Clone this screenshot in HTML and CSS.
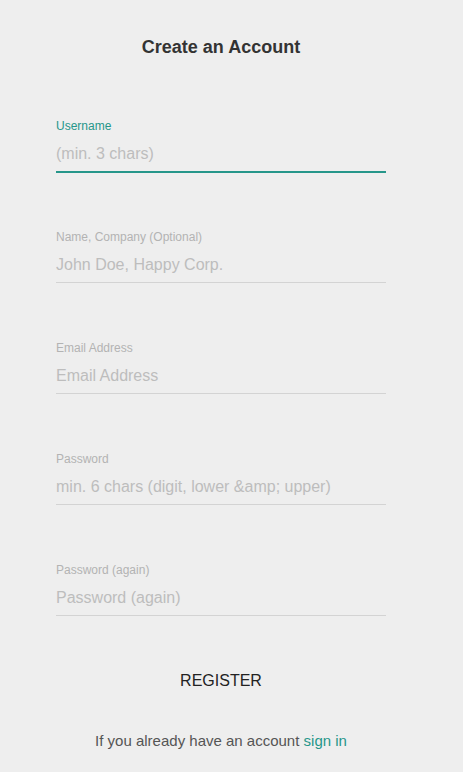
FILE: index.html
```html
<!DOCTYPE html>
<html>
<head>
<meta charset="utf-8">
<link rel="stylesheet" href="styles.css">
</head>
<body>
<div class="page">
  <h1 class="title">Create an Account</h1>
  <form class="form">
    <div class="field active">
      <label class="label">Username</label>
      <input class="input" type="text" placeholder="(min. 3 chars)">
    </div>
    <div class="field">
      <label class="label">Name, Company (Optional)</label>
      <input class="input" type="text" placeholder="John Doe, Happy Corp.">
    </div>
    <div class="field">
      <label class="label">Email Address</label>
      <input class="input" type="text" placeholder="Email Address">
    </div>
    <div class="field">
      <label class="label">Password</label>
      <input class="input" type="password" placeholder="min. 6 chars (digit, lower &amp;amp; upper)">
    </div>
    <div class="field">
      <label class="label">Password (again)</label>
      <input class="input" type="password" placeholder="Password (again)">
    </div>
    <div class="actions">
      <button class="register" type="button">REGISTER</button>
    </div>
    <p class="signin">If you already have an account <a class="link" href="#">sign in</a></p>
  </form>
</div>
</body>
</html>
```

FILE: styles.css
```css
html, body {
  margin: 0;
  padding: 0;
  background: #eeeeee;
  font-family: "Liberation Sans", Arial, Helvetica, sans-serif;
}
.page {
  width: 330px;
  margin-left: 56px;
  padding-top: 37px;
}
.title {
  margin: 0;
  font-size: 18px;
  line-height: 20px;
  font-weight: bold;
  color: #333333;
  text-align: center;
}
.form {
  margin-top: 62px;
}
.field {
  display: flex;
  flex-direction: column;
  margin-bottom: 57px;
}
.label {
  font-size: 12px;
  line-height: 14px;
  color: #b3b3b3;
  margin-bottom: 4px;
}
.input {
  box-sizing: border-box;
  height: 35px;
  padding: 0;
  margin: 0 0 1px;
  border: none;
  border-bottom: 1px solid #d3d3d3;
  background: transparent;
  font-family: inherit;
  font-size: 16px;
  color: #333;
  outline: none;
}
.input::placeholder {
  color: #bdbdbd;
}
.field.active .label {
  color: #26968a;
}
.field.active .input {
  height: 36px;
  margin-bottom: 0;
  border-bottom: 2px solid #26968a;
}
.actions {
  display: flex;
  justify-content: center;
  margin-top: -3px;
}
.register {
  border: none;
  background: transparent;
  padding: 0;
  font-family: inherit;
  font-size: 16px;
  line-height: 20px;
  color: #222222;
  cursor: pointer;
}
.signin {
  margin: 40px 0 0;
  text-align: center;
  font-size: 15px;
  line-height: 20px;
  color: #555555;
}
.link {
  color: #26968a;
  text-decoration: none;
}
```
